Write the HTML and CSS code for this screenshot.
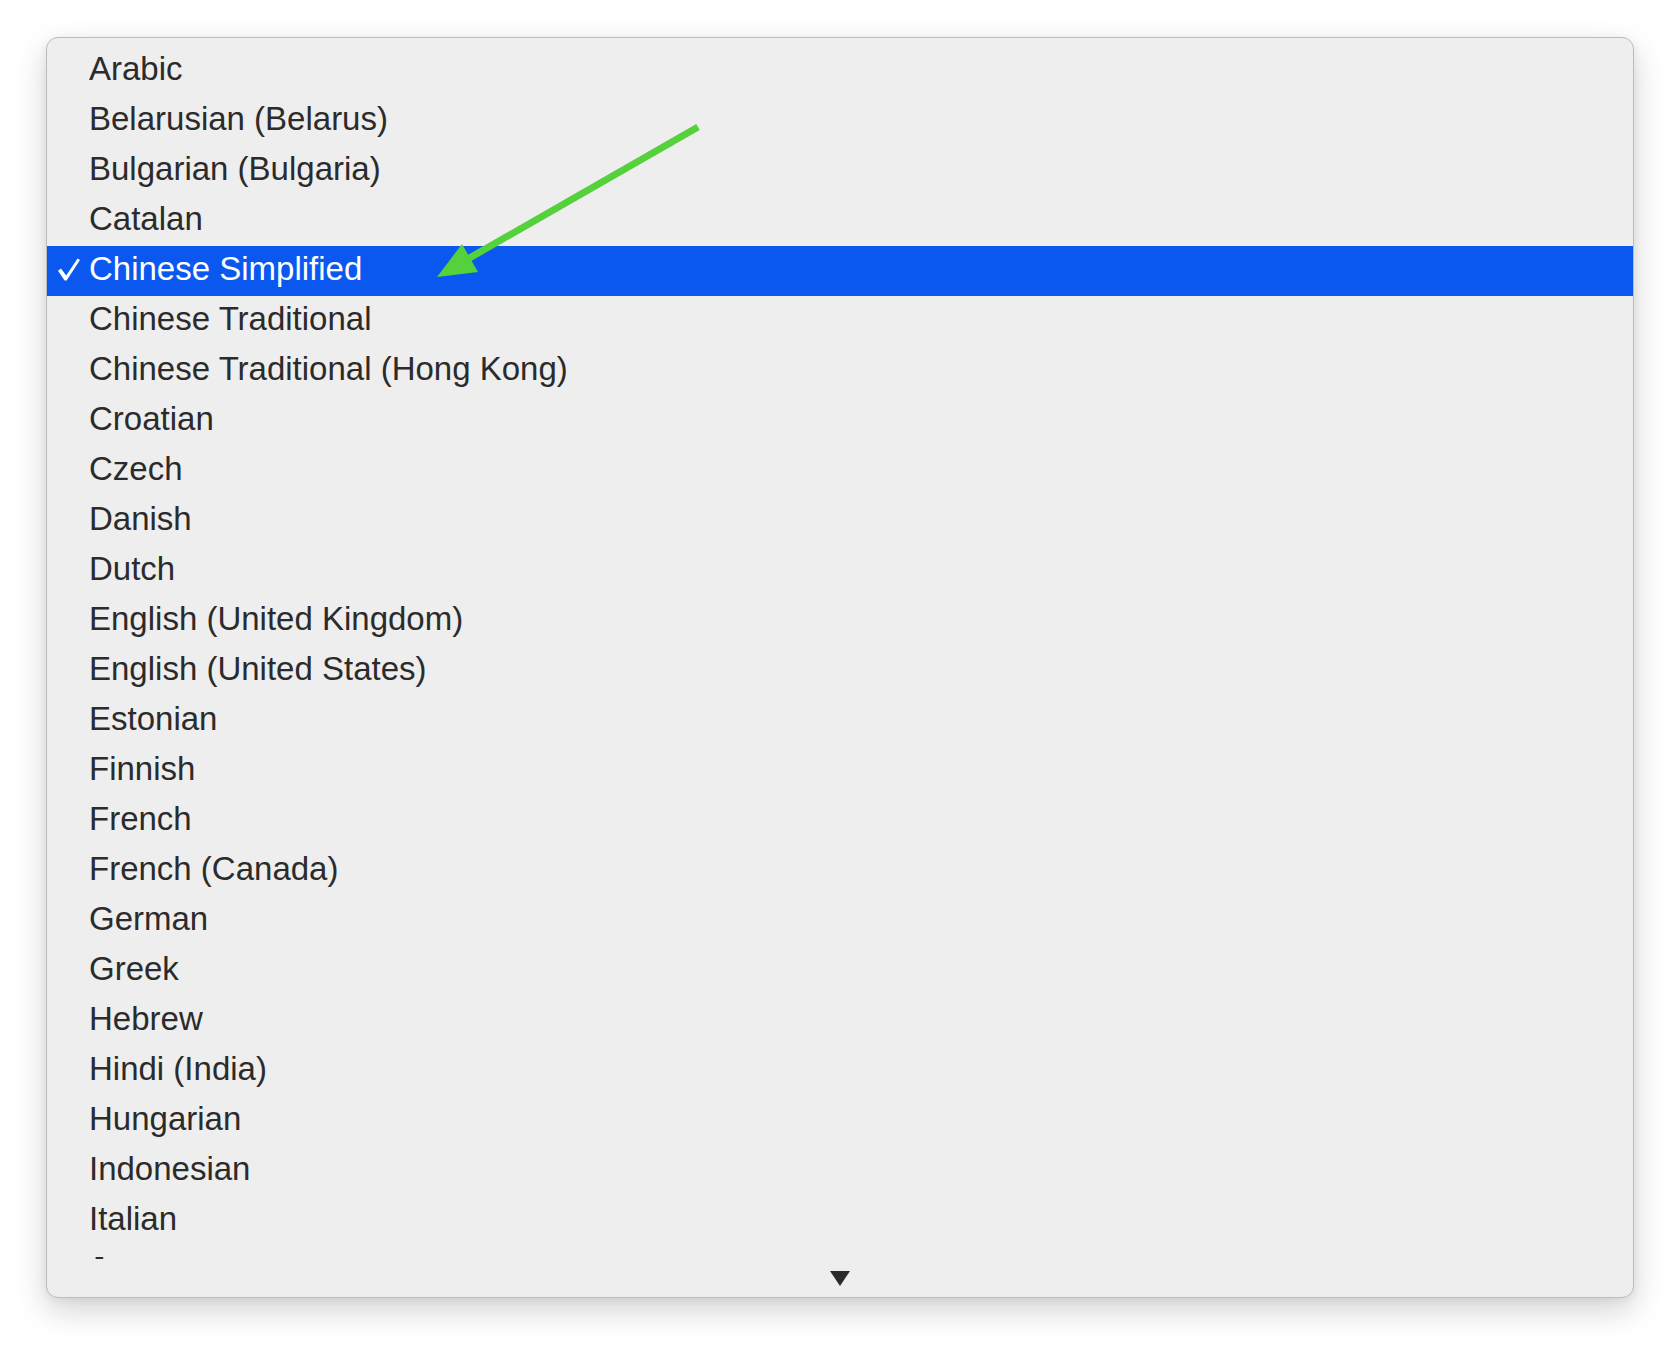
FILE: index.html
```html
<!DOCTYPE html>
<html>
<head>
<meta charset="utf-8">
<link rel="stylesheet" href="styles.css">
</head>
<body>
<div class="menu">
  <ul class="list">
    <li class="item"><span class="mark"></span><span class="label">Arabic</span></li>
    <li class="item"><span class="mark"></span><span class="label">Belarusian (Belarus)</span></li>
    <li class="item"><span class="mark"></span><span class="label">Bulgarian (Bulgaria)</span></li>
    <li class="item"><span class="mark"></span><span class="label">Catalan</span></li>
    <li class="item selected"><span class="mark"><svg class="check" width="24" height="26" viewBox="0 0 24 26"><polygon points="0,13.8 3,11.6 8.2,18.6 19.6,1.6 22,3 8.6,23.6 6.6,23.6" fill="#ffffff"/></svg></span><span class="label">Chinese Simplified</span></li>
    <li class="item"><span class="mark"></span><span class="label">Chinese Traditional</span></li>
    <li class="item"><span class="mark"></span><span class="label">Chinese Traditional (Hong Kong)</span></li>
    <li class="item"><span class="mark"></span><span class="label">Croatian</span></li>
    <li class="item"><span class="mark"></span><span class="label">Czech</span></li>
    <li class="item"><span class="mark"></span><span class="label">Danish</span></li>
    <li class="item"><span class="mark"></span><span class="label">Dutch</span></li>
    <li class="item"><span class="mark"></span><span class="label">English (United Kingdom)</span></li>
    <li class="item"><span class="mark"></span><span class="label">English (United States)</span></li>
    <li class="item"><span class="mark"></span><span class="label">Estonian</span></li>
    <li class="item"><span class="mark"></span><span class="label">Finnish</span></li>
    <li class="item"><span class="mark"></span><span class="label">French</span></li>
    <li class="item"><span class="mark"></span><span class="label">French (Canada)</span></li>
    <li class="item"><span class="mark"></span><span class="label">German</span></li>
    <li class="item"><span class="mark"></span><span class="label">Greek</span></li>
    <li class="item"><span class="mark"></span><span class="label">Hebrew</span></li>
    <li class="item"><span class="mark"></span><span class="label">Hindi (India)</span></li>
    <li class="item"><span class="mark"></span><span class="label">Hungarian</span></li>
    <li class="item"><span class="mark"></span><span class="label">Indonesian</span></li>
    <li class="item"><span class="mark"></span><span class="label">Italian</span></li>
    <li class="item"><span class="mark"></span><span class="label">Japanese</span></li>
  </ul>
  <div class="scroller">
    <svg class="down" width="20" height="15" viewBox="0 0 20 15"><polygon points="0,0 20,0 10,15" fill="#2b2b2b"/></svg>
  </div>
</div>
<svg class="annotation" width="1680" height="1352" viewBox="0 0 1680 1352">
  <line x1="698" y1="127" x2="466" y2="260" stroke="#55d13b" stroke-width="7"/>
  <polygon points="437,277 462,244 478,272" fill="#55d13b"/>
</svg>
</body>
</html>
```

FILE: styles.css
```css
html, body {
  margin: 0;
  padding: 0;
  background: #ffffff;
}

body {
  position: relative;
  width: 1680px;
  height: 1352px;
  overflow: hidden;
  font-family: "Liberation Sans", Arial, sans-serif;
}

.menu {
  box-sizing: border-box;
  margin: 37px 0 0 46px;
  width: 1588px;
  height: 1261px;
  background: #eeeeee;
  border: 1px solid #bcbcbc;
  border-radius: 12px;
  box-shadow: 0 12px 32px rgba(0, 0, 0, 0.18), 0 2px 8px rgba(0, 0, 0, 0.06);
  display: flex;
  flex-direction: column;
  overflow: hidden;
}

.list {
  list-style: none;
  margin: 0;
  padding: 8px 0 0 0;
  flex: 1;
  overflow: hidden;
}

.item {
  display: flex;
  align-items: flex-start;
  height: 50px;
  box-sizing: border-box;
  padding-bottom: 4px;
  font-size: 33px;
  line-height: 46px;
  color: #2b2b2b;
  white-space: nowrap;
}

.item.selected {
  background: #0a58f0;
  color: #ffffff;
}

.mark {
  width: 42px;
  height: 46px;
  flex: none;
  display: flex;
  align-items: flex-start;
}

.check {
  display: block;
  margin: 11px 0 0 11px;
}

.label {
  display: block;
}

.scroller {
  flex: none;
  height: 38px;
  display: flex;
  align-items: center;
  justify-content: center;
}

.down {
  display: block;
}

.annotation {
  position: absolute;
  left: 0;
  top: 0;
  pointer-events: none;
}
```
